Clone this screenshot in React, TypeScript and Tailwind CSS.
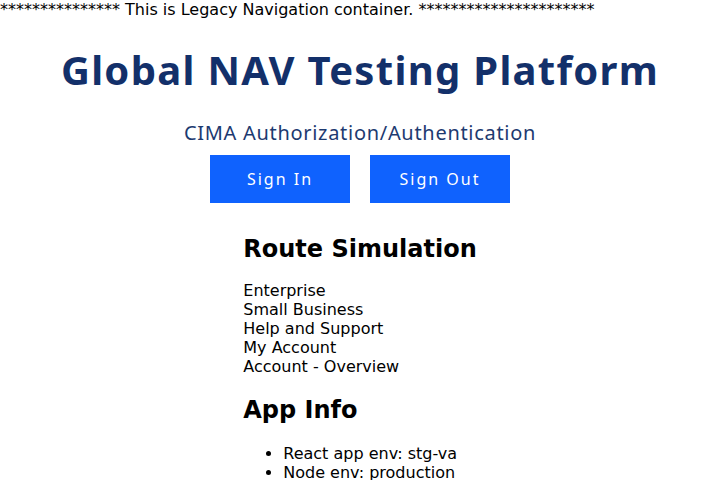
export default function App() {
  const routes = ["Enterprise", "Small Business", "Help and Support", "My Account", "Account - Overview"];
  const info = ["React app env: stg-va", "Node env: production"];

  return (
    <div className="min-h-[480px] bg-white text-black [font-family:'DejaVu_Sans',sans-serif]">
      <div className="h-[19px] text-base leading-[19px]">
        *************** This is Legacy Navigation container. **********************
      </div>

      <h1 className="mt-[27px] text-center text-[40px] font-bold leading-[48px] tracking-[1.3px] text-[#13306a] [font-family:'Noto_Sans',sans-serif]">
        Global NAV Testing Platform
      </h1>

      <p className="mt-[27px] text-center text-[20px] leading-[24px] tracking-[0.7px] text-[#1d3a70] [font-family:'Noto_Sans',sans-serif]">
        CIMA Authorization/Authentication
      </p>

      <div className="mt-[10px] flex justify-center gap-5 [font-family:'Noto_Sans',sans-serif]">
        <button className="h-12 w-[140px] bg-[#0f62fe] text-base tracking-[2px] text-white">Sign In</button>
        <button className="h-12 w-[140px] bg-[#0f62fe] text-base tracking-[2px] text-white">Sign Out</button>
      </div>

      <div className="mx-auto w-fit">
        <h2 className="mt-[32px] text-2xl font-bold leading-[28px]">Route Simulation</h2>
        <div className="mt-[18px] text-base leading-[19px]">
          {routes.map((r) => (
            <div key={r}>{r}</div>
          ))}
        </div>

        <h2 className="mt-[20px] text-2xl font-bold leading-[28px]">App Info</h2>
        <ul className="mt-[20px] list-disc pl-10 text-base leading-[19px]">
          {info.map((i) => (
            <li key={i}>{i}</li>
          ))}
        </ul>
      </div>
    </div>
  );
}
